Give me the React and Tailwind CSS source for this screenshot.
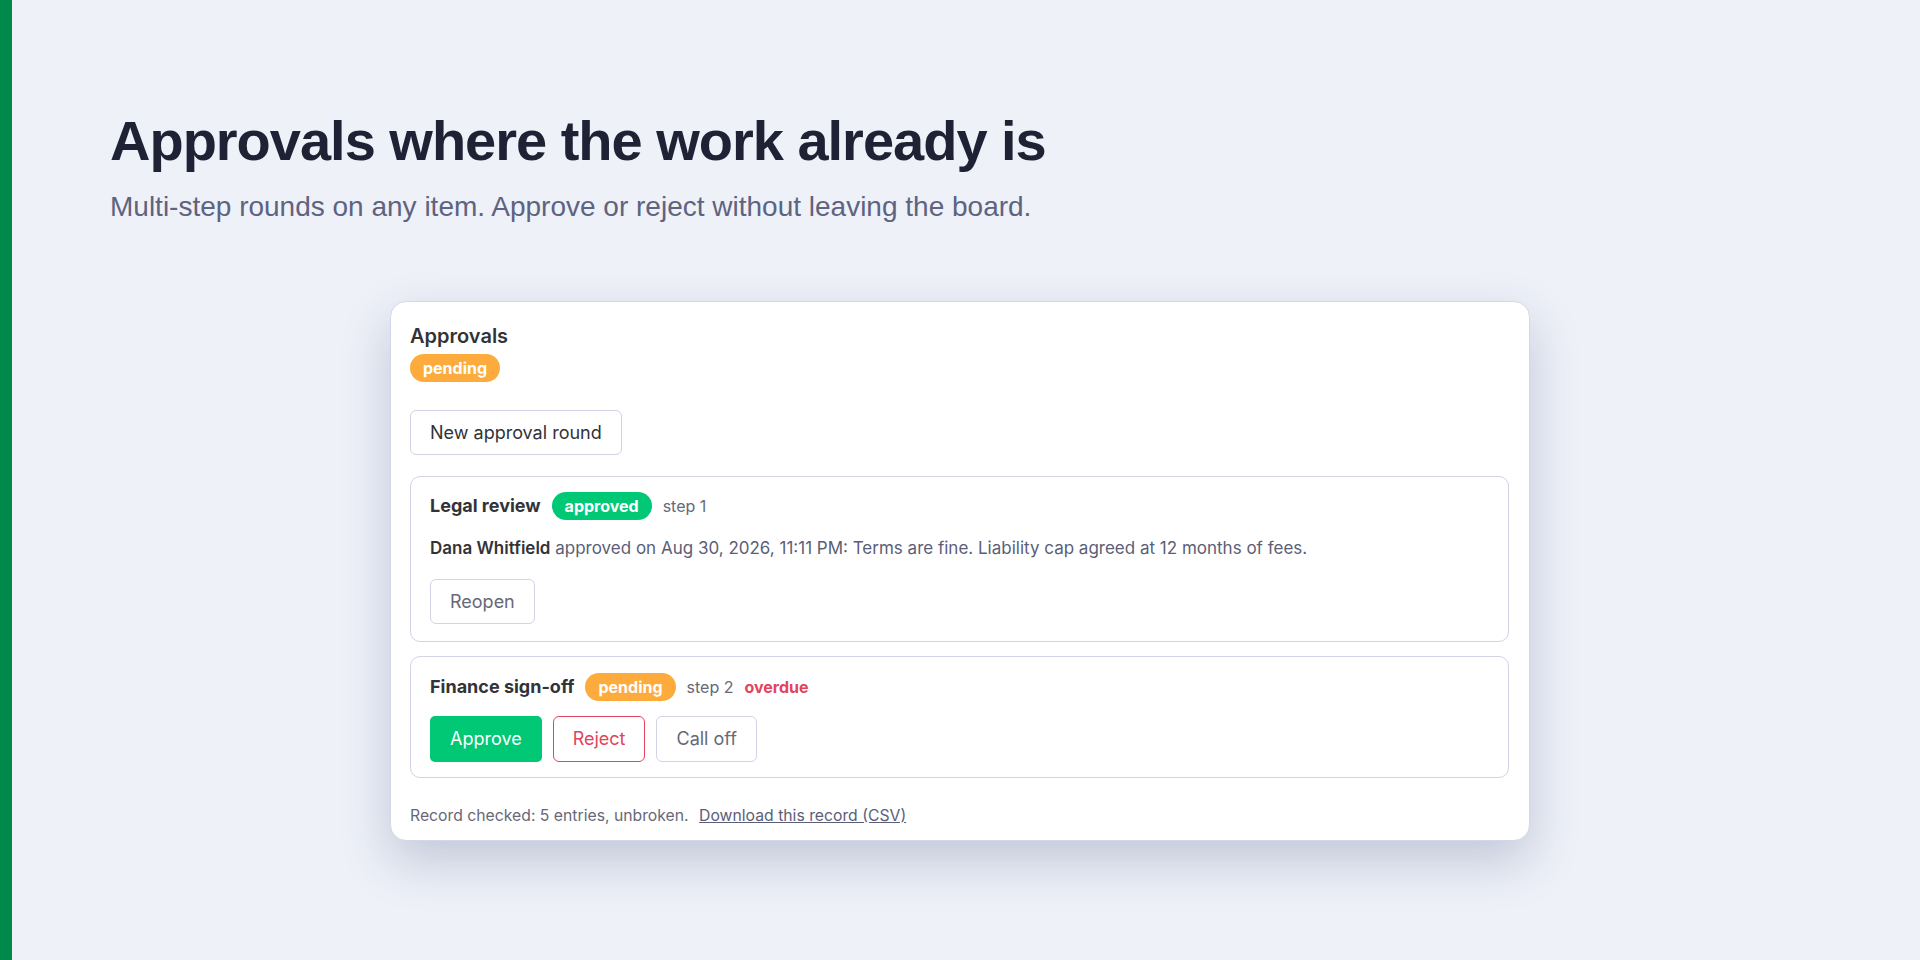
import React from "react";

const Badge = ({ tone, children }) => {
  const tones = {
    pending: "bg-[#fdab3d]",
    approved: "bg-[#00c875]",
  };
  return (
    <span
      className={`inline-flex h-7 items-center rounded-full px-[13px] text-[16px] font-bold text-white ${tones[tone]}`}
    >
      {children}
    </span>
  );
};

const StepHeader = ({ title, status, step, overdue }) => (
  <div className="flex items-center gap-[11px]">
    <span className="text-[18px] font-bold text-[#323338]">{title}</span>
    <Badge tone={status}>{status}</Badge>
    <span className="text-[16px] text-[#676879]">step {step}</span>
    {overdue && <span className="text-[16px] font-bold text-[#e2445c]">overdue</span>}
  </div>
);

const OutlineButton = ({ children, className = "" }) => (
  <button
    className={`h-[45px] rounded-md border border-[#d0d4e4] bg-white px-[19px] text-[18px] ${className}`}
  >
    {children}
  </button>
);

const App = () => {
  return (
    <div className="min-h-screen border-l-[12px] border-[#00894b] bg-[#eef1f8] pb-16 pl-[98px] pr-[110px] pt-[110px]">
      <h1 className="font-['Liberation_Sans',Arial,sans-serif] text-[56px] font-bold leading-[1.1] tracking-[-0.018em] text-[#1f2235]">
        Approvals where the work already is
      </h1>
      <p className="mt-[15px] font-['Liberation_Sans',Arial,sans-serif] text-[28px] leading-[1.4] text-[#5d6380]">
        Multi-step rounds on any item. Approve or reject without leaving the board.
      </p>

      <section className="mx-auto mt-[75px] w-[1140px] rounded-2xl border border-[#d3d7ea] bg-white pb-[12px] pl-[19px] pr-5 pt-5 font-['Inter',sans-serif] shadow-[0_20px_50px_rgba(40,50,100,0.22)]">
        <h2 className="text-[20px] font-semibold leading-7 text-[#323338]">Approvals</h2>
        <div className="mt-1 flex">
          <Badge tone="pending">pending</Badge>
        </div>

        <OutlineButton className="mt-[28px] text-[#323338]">New approval round</OutlineButton>

        {/* round steps */}
        <div className="mt-[21px] flex flex-col gap-[14px]">
          <div className="rounded-[10px] border border-[#d0d4e4] pb-[17px] pl-[19px] pr-5 pt-[15px]">
            <StepHeader title="Legal review" status="approved" step={1} />
            <p className="mt-[15px] text-[17px] leading-[27px] text-[#5b5e77]">
              <span className="font-semibold text-[#323338]">Dana Whitfield</span> approved on Aug 30,
              2026, 11:11 PM: Terms are fine. Liability cap agreed at 12 months of fees.
            </p>
            <OutlineButton className="mt-[17px] text-[#676879]">Reopen</OutlineButton>
          </div>

          <div className="rounded-[10px] border border-[#d0d4e4] pb-[15px] pl-[19px] pr-5 pt-4">
            <StepHeader title="Finance sign-off" status="pending" step={2} overdue />
            <div className="mt-[15px] flex gap-[11px]">
              <button className="h-[46px] rounded-[5px] bg-[#00c875] px-5 text-[18px] text-white">
                Approve
              </button>
              <OutlineButton className="h-[46px] border-[#e2445c] text-[#e2445c]">Reject</OutlineButton>
              <OutlineButton className="h-[46px] text-[#676879]">Call off</OutlineButton>
            </div>
          </div>
        </div>

        <p className="mt-[26px] text-[15.75px] leading-6 text-[#676879]">
          Record checked: 5 entries, unbroken.{" "}
          <a href="#" className="ml-[6px] text-[#5b5e77] underline">
            Download this record (CSV)
          </a>
        </p>
      </section>
    </div>
  );
};

export default App;
